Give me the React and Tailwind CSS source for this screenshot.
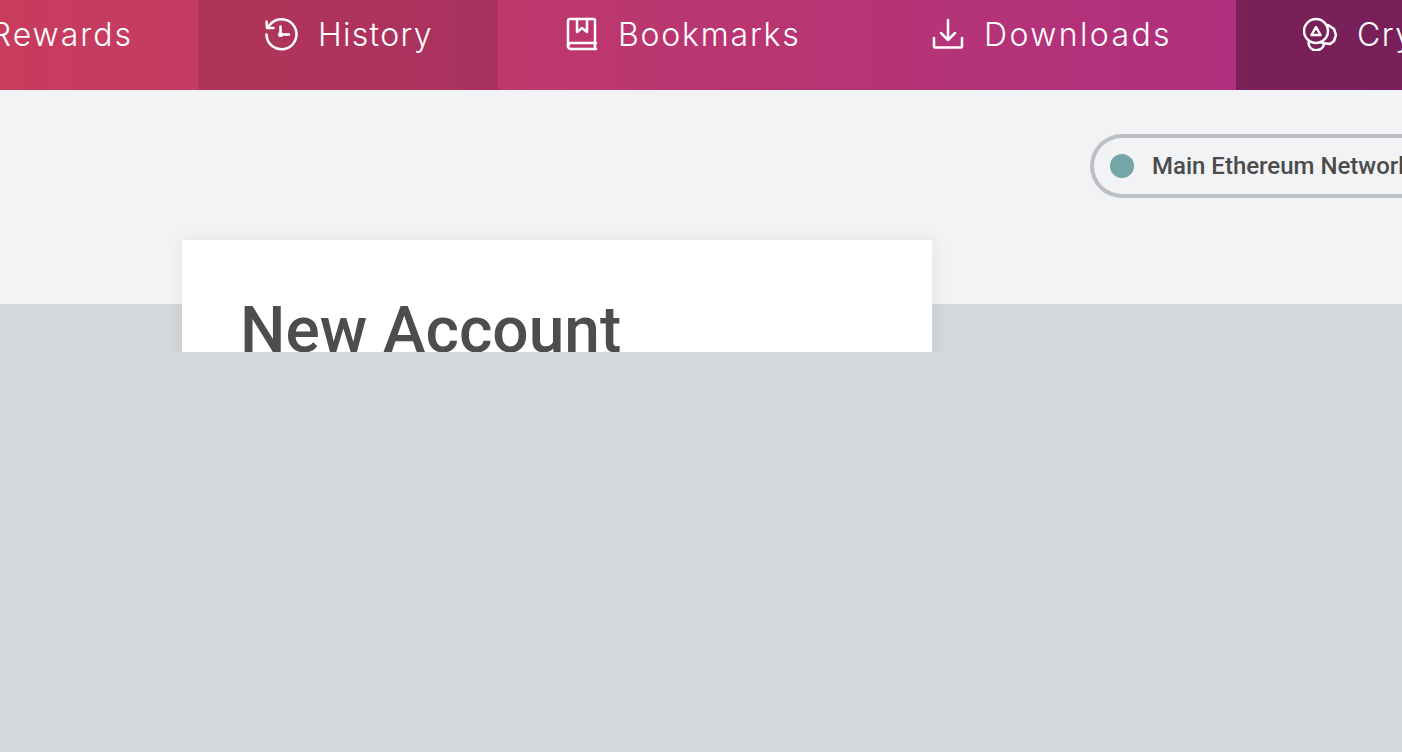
import React from "react";

const S = { fill: "none", stroke: "white", strokeWidth: 2.5, strokeLinecap: "round", strokeLinejoin: "round" };

function HistoryIcon() {
  return (
    <svg width="34" height="34" viewBox="0 0 34 34" className="shrink-0" {...S}>
      <path d="M2.5 17.5A15 15 0 1 0 7.5 6L3.5 10.5" />
      <path d="M2.5 4.5L3 11L9.5 11" />
      <path d="M16.5 9.5V17.5H25" />
      <circle cx="16.5" cy="17.5" r="1.3" fill="white" />
    </svg>
  );
}
function BookmarkIcon() {
  return (
    <svg width="32" height="34" viewBox="0 0 32 34" className="shrink-0" {...S}>
      <path d="M29 26V3.5A1.5 1.5 0 0 0 27.5 2H3.5A2 2 0 0 0 2 3.5V29" />
      <path d="M30 32H5A3 3 0 0 1 2 29A3 3 0 0 1 5 26H30" />
      <path d="M29 26V32" />
      <path d="M11 2V15L16 11L21 15V2" />
    </svg>
  );
}
function DownloadIcon() {
  return (
    <svg width="32" height="32" viewBox="0 0 32 32" className="shrink-0" {...S}>
      <path d="M16 2V21" />
      <path d="M9 15L16 22L23 15" />
      <path d="M2 20V28.5A1 1 0 0 0 3 29.5H29A1 1 0 0 0 30 28.5V20" />
    </svg>
  );
}
function CryptoIcon() {
  return (
    <svg width="34" height="34" viewBox="0 0 34 34" className="shrink-0" {...S}>
      <circle cx="13" cy="14" r="12" />
      <path d="M13 10L17.5 18H8.5Z" />
      <path d="M25 8L31 12L33 18L31 24L27 27L19 26" />
      <path d="M6 24A7 7 0 0 0 14 33A7 7 0 0 0 21 27" />
    </svg>
  );
}

function Item({ icon, label, className, textClass }) {
  return (
    <div className={`flex h-full shrink-0 items-center gap-[20px] pb-[22px] ${className}`}>
      {icon}
      <span className={`whitespace-nowrap pt-[2px] text-[32px] font-[350] leading-none text-white [font-family:Inter,'Noto_Sans',sans-serif] ${textClass}`}>
        {label}
      </span>
    </div>
  );
}

export default function App() {
  return (
    <div className="relative h-[752px] w-full overflow-hidden bg-[#d5d8db]">
      <div className="h-[352px] overflow-hidden">
        <nav className="flex h-[90px] bg-gradient-to-r from-[#c83c5d] to-[#ac2d82]">
          <Item label="Rewards" className="w-[198px] justify-end pr-[65px]" textClass="tracking-[2px]" />
          <Item icon={<HistoryIcon />} label="History" className="w-[300px] bg-black/10 pl-[66px]" textClass="tracking-[1.3px]" />
          <Item icon={<BookmarkIcon />} label="Bookmarks" className="w-[367px] pl-[68px]" textClass="tracking-[1.8px]" />
          <Item icon={<DownloadIcon />} label="Downloads" className="w-[371px] pl-[67px]" textClass="tracking-[2.4px]" />
          <Item icon={<CryptoIcon />} label="Crypto" className="w-[400px] bg-black/30 pl-[67px]" textClass="tracking-[1.5px]" />
        </nav>
        <div className="h-[214px] bg-[#f2f3f5] pl-[1090px] pt-[44px]">
          <div className="flex h-[64px] w-[400px] items-center gap-[18px] rounded-l-[32px] border-[4px] border-r-0 border-[#bcbfc3] pl-[16px]">
            <span className="h-[24px] w-[24px] shrink-0 rounded-full bg-[#73a5a9]" />
            <span className="whitespace-nowrap text-[24px] font-medium text-[#4b4b4b] [font-family:Roboto,sans-serif]">
              Main Ethereum Network
            </span>
          </div>
        </div>
        <div className="relative z-10 ml-[182px] mt-[-64px] h-[300px] w-[750px] bg-white pl-[58px] pt-[51px] shadow-[0_0_16px_rgba(0,0,0,0.08)]">
          <h1 className="whitespace-nowrap text-[64px] font-medium leading-[80px] text-[#4d4d4d] [font-family:Roboto,sans-serif]">
            New Account
          </h1>
        </div>
      </div>
      <div className="absolute bottom-[-56px] right-[-56px] h-[56px] w-[56px] rounded-full shadow-[0_0_16px_rgba(0,0,0,0.12)]" />
    </div>
  );
}
